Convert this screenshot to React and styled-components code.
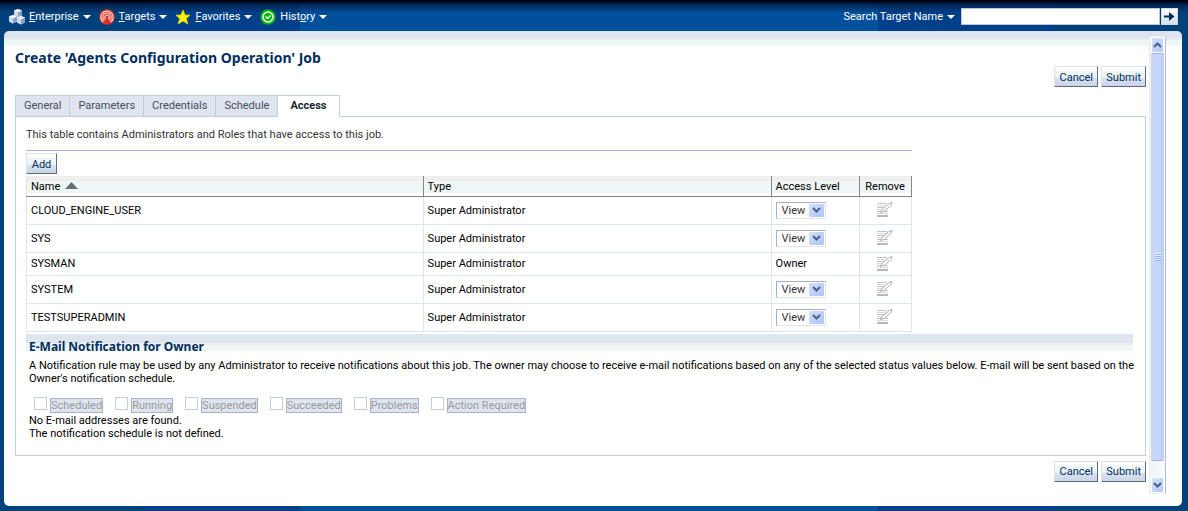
import React from "react";
import styled, { createGlobalStyle } from "styled-components";

const menus = [
	{ name: "enterprise", before: "", key: "E", after: "nterprise" },
	{ name: "targets", before: "", key: "T", after: "argets" },
	{ name: "favorites", before: "", key: "F", after: "avorites" },
	{ name: "history", before: "Hist", key: "o", after: "ry" },
];

const tabs = ["General", "Parameters", "Credentials", "Schedule", "Access"];

const admins = [
	{ name: "CLOUD_ENGINE_USER", type: "Super Administrator" },
	{ name: "SYS", type: "Super Administrator" },
	{ name: "SYSMAN", type: "Super Administrator", owner: true },
	{ name: "SYSTEM", type: "Super Administrator" },
	{ name: "TESTSUPERADMIN", type: "Super Administrator" },
];

const statuses = [
	"Scheduled",
	"Running",
	"Suspended",
	"Succeeded",
	"Problems",
	"Action Required",
];

const Cube = ({ x, y }) => (
	<g transform={`translate(${x} ${y})`}>
		<path d="M4 0 8 1.5V6.5L4 8.5 0 6.5V1.5Z" fill="#b9c9df" />
		<path d="M4 0 8 1.5 4 3.5 0 1.5Z" fill="#f4f7fb" />
		<path d="M0 1.5 4 3.5V8.5L0 6.5Z" fill="#d3dcea" />
		<path d="M8 1.5 4 3.5V8.5L8 6.5Z" fill="#86a2cb" />
	</g>
);

const MenuIcon = ({ name }) => {
	switch (name) {
		case "enterprise":
			return (
				<svg width="16" height="16" viewBox="0 0 16 16" aria-hidden="true">
					<Cube x={5} y={0} />
					<Cube x={0} y={6} />
					<Cube x={8} y={7} />
				</svg>
			);
		case "targets":
			return (
				<svg width="16" height="16" viewBox="0 0 16 16" aria-hidden="true">
					<circle cx="8" cy="8" r="7.8" fill="#dd2f22" />
					<g fill="none" stroke="#f8d3cd" strokeWidth="1.2">
						<path d="M4.3 13.2A6.2 6.2 0 1 1 11.7 13.2" />
						<path d="M5.4 11.6A4.2 4.2 0 1 1 10.6 11.6" />
						<path d="M6.7 10.2A2.2 2.2 0 1 1 9.3 10.2" />
					</g>
				</svg>
			);
		case "favorites":
			return (
				<svg width="16" height="16" viewBox="0 0 16 16" aria-hidden="true">
					<path
						d="M8 1 10 6 15 6.2 11.3 9.6 12.8 15 8 12 3.2 15 4.7 9.6 1 6.2 6 6Z"
						fill="#fff200"
						stroke="#e8d800"
						strokeWidth="0.8"
					/>
				</svg>
			);
		default:
			return (
				<svg width="16" height="16" viewBox="0 0 16 16" aria-hidden="true">
					<circle cx="8" cy="8" r="7.8" fill="#00b400" />
					<circle
						cx="8"
						cy="8"
						r="5"
						fill="none"
						stroke="#fff"
						strokeWidth="1.6"
					/>
					<path
						d="M5.5 7.5 7.5 9.5 10.5 6.5"
						fill="none"
						stroke="#fff"
						strokeWidth="1.4"
					/>
				</svg>
			);
	}
};

const Caret = () => (
	<svg width="8" height="4" viewBox="0 0 8 4" aria-hidden="true">
		<path d="M0 0H8L4 4Z" fill="#fff" />
	</svg>
);

const Chevron = ({ up }) => (
	<svg width="9" height="6" viewBox="0 0 9 6" aria-hidden="true">
		<path
			d={up ? "M1 5 4.5 1.5 8 5" : "M1 1 4.5 4.5 8 1"}
			fill="none"
			stroke="#4d6185"
			strokeWidth="2"
		/>
	</svg>
);

const EditIcon = () => (
	<svg width="16" height="16" viewBox="0 0 16 16" aria-hidden="true">
		<path d="M0 1.5H10M0 5.5H7M0 9.5H4" stroke="#c4c4c4" />
		<path d="M0 3.5H8M0 7.5H5M0 11.5H11" stroke="#d6d9de" />
		<path d="M7 9.5H11" stroke="#c4c4c4" />
		<path d="M0 14H11" stroke="#b8b8b8" strokeWidth="2" />
		<path
			d="M3.5 10.5 5 7.5 12 1.5 15 .5 14 3.5 7 9.5Z"
			fill="#fff"
			stroke="#a4a4a4"
			strokeWidth="0.9"
		/>
	</svg>
);

const App = () => {
	return (
		<>
			<GlobalStyle />
			<Page>
				<TopBar>
					<Menus>
						{menus.map((menu) => (
							<MenuButton key={menu.name}>
								<MenuIcon name={menu.name} />
								<span>
									{menu.before}
									<u>{menu.key}</u>
									{menu.after}
								</span>
								<Caret />
							</MenuButton>
						))}
					</Menus>
					<Search>
						<MenuButton type="button">
							<span>Search Target Name</span>
							<Caret />
						</MenuButton>
						<SearchField>
							<SearchInput type="text" aria-label="Search Target Name" />
							<GoButton aria-label="Go">
								<svg width="11" height="9" viewBox="0 0 11 9">
									<path d="M0 3.5H5V0L10.5 4.5 5 9V5.5H0Z" fill="#00305a" />
								</svg>
							</GoButton>
						</SearchField>
					</Search>
				</TopBar>
				<Panel>
					<Content>
						<Title>Create 'Agents Configuration Operation' Job</Title>
						<Actions>
							<Button>Cancel</Button>
							<Button>Submit</Button>
						</Actions>
						<Tabs role="tablist">
							{tabs.map((tab) => (
								<Tab
									key={tab}
									role="tab"
									aria-selected={tab === "Access"}
									$active={tab === "Access"}
								>
									{tab}
								</Tab>
							))}
						</Tabs>
						<TabBody>
							<Intro>
								This table contains Administrators and Roles that have access to
								this job.
							</Intro>
							<TableArea>
								<AddButton>Add</AddButton>
								<Table>
									<colgroup>
										<col />
										<Col $width="348px" />
										<Col $width="88px" />
										<Col $width="52px" />
									</colgroup>
									<thead>
										<tr>
											<Head>
												Name
												<SortArrow
													width="13"
													height="7"
													viewBox="0 0 13 7"
													aria-hidden="true"
												>
													<path d="M0 7 6.5 0 13 7Z" fill="#5f7078" />
												</SortArrow>
											</Head>
											<Head>Type</Head>
											<Head>Access Level</Head>
											<Head $center>Remove</Head>
										</tr>
									</thead>
									<tbody>
										{admins.map((admin) => (
											<Row key={admin.name} $short={admin.owner}>
												<Cell>{admin.name}</Cell>
												<Cell>{admin.type}</Cell>
												<Cell>
													{admin.owner ? (
														"Owner"
													) : (
														<SelectBox>
															<Select
																aria-label={`Access level for ${admin.name}`}
															>
																<option>View</option>
															</Select>
															<SelectArrow>
																<Chevron />
															</SelectArrow>
														</SelectBox>
													)}
												</Cell>
												<Cell $center>
													<IconButton
														aria-label={`Remove ${admin.name}`}
														disabled
													>
														<EditIcon />
													</IconButton>
												</Cell>
											</Row>
										))}
									</tbody>
								</Table>
							</TableArea>
							<SectionTitle>E-Mail Notification for Owner</SectionTitle>
							<Notes>
								<p>
									A Notification rule may be used by any Administrator to receive
									notifications about this job. The owner may choose to receive
									e-mail notifications based on any of the selected status values
									below. E-mail will be sent based on the Owner's notification
									schedule.
								</p>
								<Checks>
									{statuses.map((status) => (
										<Check key={status}>
											<input type="checkbox" disabled />
											<span>{status}</span>
										</Check>
									))}
								</Checks>
								<p>No E-mail addresses are found.</p>
								<p>The notification schedule is not defined.</p>
							</Notes>
						</TabBody>
						<Actions>
							<Button>Cancel</Button>
							<Button>Submit</Button>
						</Actions>
					</Content>
					<Scrollbar>
						<ScrollButton aria-label="Scroll up">
							<Chevron up />
						</ScrollButton>
						<Thumb>
							<Grip />
						</Thumb>
						<ScrollButton aria-label="Scroll down">
							<Chevron />
						</ScrollButton>
					</Scrollbar>
				</Panel>
			</Page>
		</>
	);
};

const GlobalStyle = createGlobalStyle`
	* {
		margin: 0;
		padding: 0;
		box-sizing: border-box;
	}
	body {
		background: #00417b;
	}
	body, button, input, select {
		font-family: Roboto, "Liberation Sans", sans-serif;
		font-size: 11px;
		line-height: 13px;
	}
	h1, h2 {
		font-family: "Noto Sans", "Open Sans", sans-serif;
	}
	svg {
		display: block;
		flex: none;
	}
`;

const Page = styled.div`
	display: flex;
	flex-direction: column;
	min-height: 100vh;
	padding: 0 6px 5px 4px;
	background:
		linear-gradient(#000010 1px, #00204bcc 5px, transparent 13px),
		linear-gradient(
			90deg,
			#00417b 142px,
			#00408a 142px 300px,
			#00509c 300px 878px,
			#00408a 878px 1054px,
			#00417b 1054px
		);
`;

const TopBar = styled.header`
	display: flex;
	align-items: center;
	justify-content: space-between;
	height: 31px;
	padding: 2px 4px 0 5px;
`;

const Menus = styled.nav`
	display: flex;
	gap: 8px;
`;

const MenuButton = styled.button`
	display: flex;
	align-items: center;
	gap: 4px;
	border: none;
	background: none;
	color: #fff;
	white-space: nowrap;
`;

const Search = styled.div`
	display: flex;
	align-items: center;
	gap: 6px;
`;

const SearchField = styled.div`
	display: flex;
	gap: 1px;
`;

const SearchInput = styled.input`
	width: 199px;
	height: 17px;
	border: 1px solid #b9c6d6;
	background: #fff;
`;

const GoButton = styled.button`
	display: flex;
	align-items: center;
	justify-content: center;
	width: 17px;
	height: 17px;
	border: 1px solid #cfd8e6;
	background: linear-gradient(#fff, #d5deed);
`;

const Panel = styled.main`
	display: flex;
	flex: 1;
	gap: 3px;
	padding: 5px 16px 12px 11px;
	border-radius: 5px;
	background: linear-gradient(
		#dde4ef 7px,
		#e8ecf1 7px 9px,
		#eff7f6 9px 15px,
		#fff 15px
	);
`;

const Content = styled.div`
	flex: 1;
	min-width: 0;
	padding-top: 14px;
`;

const Title = styled.h1`
	color: #002f5d;
	font-size: 14px;
	line-height: 16px;
`;

const Actions = styled.div`
	display: flex;
	justify-content: flex-end;
	gap: 3px;
`;

const Button = styled.button`
	min-width: 44px;
	height: 21px;
	padding: 1px 4px 0;
	border: 1px solid;
	border-color: #dce3ee #5c6b7d #5c6b7d #dce3ee;
	background: linear-gradient(#fff 3px, #eff6f6 4px 10px, #dbe2ef 11px, #c9d5e9);
	color: #002f5d;
`;

const AddButton = styled(Button)`
	min-width: 31px;
`;

const Tabs = styled.div`
	display: flex;
	margin-top: 8px;
`;

const Tab = styled.button`
	height: 22px;
	margin-bottom: -1px;
	border: 1px solid #c5ced6;
	border-right-width: ${(props) => (props.$active ? "1px" : "0")};
	border-bottom-color: ${(props) => (props.$active ? "#fff" : "#c5ced6")};
	padding: 0 ${(props) => (props.$active ? "12px" : "8px")} 2px;
	background: ${(props) => (props.$active ? "#fff" : "#dfe5f0")};
	color: ${(props) => (props.$active ? "#1c2633" : "#454f5b")};
	font-weight: ${(props) => (props.$active ? "bold" : "normal")};
	position: relative;
`;

const TabBody = styled.section`
	margin-bottom: 5px;
	padding: 11px 12px 15px 10px;
	border: 1px solid #c5ced6;
`;

const Intro = styled.p`
	color: #333;
`;

const TableArea = styled.div`
	width: 80%;
	margin-top: 9px;
	padding-top: 2px;
	border-top: 1px solid #a9b1d8;
`;

const Table = styled.table`
	width: 100%;
	margin-top: 2px;
	border-collapse: collapse;
	table-layout: fixed;
`;

const Col = styled.col`
	width: ${(props) => props.$width};
`;

const Head = styled.th`
	height: 20px;
	padding: 1px 4px 0;
	border-right: 1px solid #848484;
	border-bottom: 1px solid #848484;
	border-left: 1px solid #dde5ef;
	background: linear-gradient(#eee 5px, #eff7f6 5px 17px, #fff 17px);
	font-weight: normal;
	text-align: ${(props) => (props.$center ? "center" : "left")};
	white-space: nowrap;
`;

const SortArrow = styled.svg`
	display: inline-block;
	margin-left: 5px;
	vertical-align: 1px;
`;

const Row = styled.tr`
	height: ${(props) => (props.$short ? "23px" : "28px")};
`;

const Cell = styled.td`
	padding: 0 4px;
	border: 1px solid #dde5ef;
	text-align: ${(props) => (props.$center ? "center" : "left")};
`;

const SelectBox = styled.div`
	display: grid;
	width: 50px;
	height: 17px;
	border: 1px solid;
	border-color: #a3b1c2 #dde4ee #dde4ee #a3b1c2;
	align-items: center;
`;

const Select = styled.select`
	grid-area: 1 / 1;
	padding-left: 5px;
	border: none;
	background: #fff;
	color: #333;
	appearance: none;
`;

const SelectArrow = styled.span`
	grid-area: 1 / 1;
	display: flex;
	align-items: center;
	justify-content: center;
	justify-self: end;
	width: 15px;
	height: 13px;
	margin-right: 1px;
	border-radius: 1px;
	background: linear-gradient(135deg, #d5e0fc, #a9c3f7);
	pointer-events: none;
`;

const IconButton = styled.button`
	border: none;
	background: none;
	vertical-align: middle;
`;

const SectionTitle = styled.h2`
	height: 17px;
	margin-top: 2px;
	padding: 5px 3px 0;
	background: linear-gradient(#dde5ef 9px, #eee 9px 11px, #eff7f6 11px);
	color: #002f5d;
	font-size: 12px;
	line-height: 16px;
`;

const Notes = styled.div`
	margin-right: -8px;
	padding: 8px 0 0 3px;
`;

const Checks = styled.div`
	display: flex;
	flex-wrap: wrap;
	gap: 12px;
	padding: 12px 5px 1px;
`;

const Check = styled.label`
	display: flex;
	gap: 3px;
	color: #999;
	input {
		width: 13px;
		height: 13px;
		border: 1px solid #c5ced6;
		background: #fff;
		appearance: none;
	}
	span {
		height: 15px;
		margin-top: 1px;
		border: 1px solid #a9b4c0;
		background: #dfe5f0;
	}
`;

const Scrollbar = styled.div`
	display: flex;
	flex-direction: column;
	width: 17px;
	padding: 0 1px;
	border: 1px solid #eeede5;
	border-right-color: #a9bdea;
	background: linear-gradient(90deg, #f0f6f5 8px, #fff);
`;

const ScrollButton = styled.button`
	display: flex;
	align-items: center;
	justify-content: center;
	height: 16px;
	border: 1px solid #fff;
	border-radius: 2px;
	background: linear-gradient(135deg, #d5e0fc, #b3c9f8);
`;

const Thumb = styled.div`
	display: flex;
	flex: 1;
	align-items: center;
	justify-content: center;
	margin-bottom: 16px;
	border: 1px solid #9fb5e6;
	border-width: 1px 0;
	border-radius: 2px;
	background: linear-gradient(90deg, #c8d6fb 8px, #b9cbf9);
`;

const Grip = styled.span`
	width: 6px;
	height: 8px;
	background: repeating-linear-gradient(#eef4fe 0 1px, #8cb0f8 1px 2px);
`;

export default App;
